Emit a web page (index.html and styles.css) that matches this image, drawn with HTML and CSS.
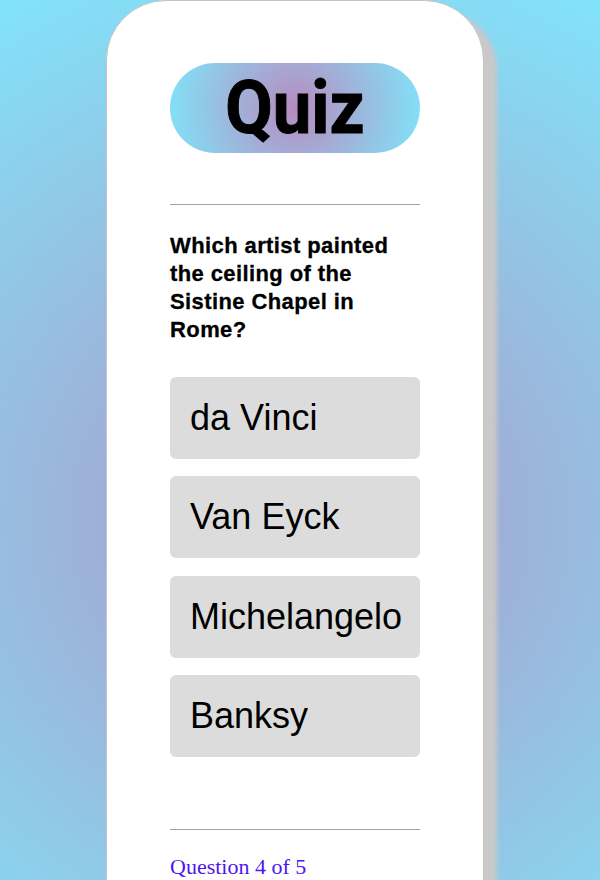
FILE: index.html
```html
<!DOCTYPE html>
<html lang="en">
<head>
<meta charset="utf-8">
<title>Quiz</title>
<link rel="stylesheet" href="styles.css">
</head>
<body>
<main class="card">
  <h1 class="title"><span class="title-text">Quiz</span></h1>
  <hr class="rule">
  <p class="question">Which artist painted the ceiling of the Sistine Chapel in Rome?</p>
  <div class="answers">
    <button class="answer">da Vinci</button>
    <button class="answer">Van Eyck</button>
    <button class="answer">Michelangelo</button>
    <button class="answer">Banksy</button>
  </div>
  <hr class="rule rule-bottom">
  <p class="progress">Question 4 of 5</p>
</main>
</body>
</html>
```

FILE: styles.css
```css
html {
  background: radial-gradient(circle at 50% 520px, #ad96c6 0, #80e6fb 620px);
}
::-webkit-scrollbar { width: 3px; }
::-webkit-scrollbar-track { background: #f1f1f1; }
::-webkit-scrollbar-thumb { background: #c1c1c1; }

body {
  margin: 0;
  padding: 0 0 0 106px;
  min-height: 1200px;
}

.card {
  width: 250px;
  padding: 62px 63px 200px;
  background: #fff;
  border: 1px solid #c4c4c4;
  border-radius: 60px 60px 0 0;
  box-shadow: 13px 10px 4px #c9c9c9;
}

.title {
  margin: 0;
  height: 90px;
  border-radius: 45px;
  background: radial-gradient(circle, #b88bc0, #80e4f9);
  font-family: Roboto, "Liberation Sans", sans-serif;
  font-weight: 700;
  font-size: 74px;
  line-height: 90px;
  text-align: center;
  color: #000;
}

.title-text {
  display: inline-block;
  transform: scaleX(0.93);
  -webkit-text-stroke: 1px #000;
}

.rule {
  margin: 51px 0 0;
  border: 0;
  border-top: 1px solid #a0a0a0;
  height: 0;
}

.question {
  margin: 27px 0 0;
  font-family: "Liberation Sans", Arial, sans-serif;
  font-weight: 700;
  font-size: 22px;
  line-height: 28px;
  letter-spacing: 0.4px;
  -webkit-text-stroke: 0.3px #000;
  color: #000;
}

.answers {
  margin-top: 33px;
  display: flex;
  flex-direction: column;
  gap: 17.33px;
}

.answer {
  display: block;
  width: 100%;
  height: 82px;
  padding: 0 20px;
  border: 0;
  border-radius: 6px;
  background: #dcdcdc;
  font-family: "Liberation Sans", Arial, sans-serif;
  font-size: 36px;
  color: #000;
  text-align: left;
}

.rule-bottom {
  margin-top: 72px;
}

.progress {
  margin: 24px 0 0;
  font-family: "Liberation Serif", serif;
  font-size: 22px;
  color: #4f16ef;
}
```
